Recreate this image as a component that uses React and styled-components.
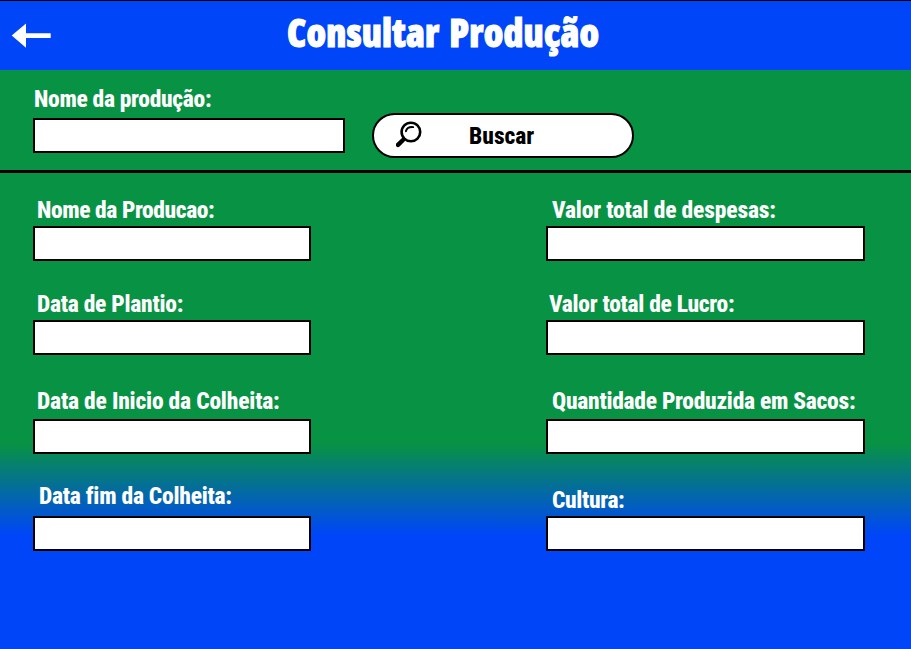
import React from 'react';
import styled, { createGlobalStyle } from 'styled-components';

const GlobalStyle = createGlobalStyle`
  * { box-sizing: border-box; }
  body { margin: 0; overflow: hidden; }
`;

const Page = styled.div`
  display: flex;
  flex-direction: column;
  width: 911px;
  height: 649px;
  overflow: hidden;
  font-family: Roboto, "Liberation Sans", sans-serif;
  color: #fff;
  background: linear-gradient(#089244 0, #089244 444px, #0046f8 535px, #0046f8 100%);
`;

const Header = styled.header`
  display: grid;
  grid-template-columns: 50px 1fr 38px;
  flex: none;
  height: 70px;
  border-top: 1px solid #000;
  background: #0046f8;
`;

const BackButton = styled.button`
  display: flex;
  width: 51px;
  height: 69px;
  padding: 22px 0 0 11px;
  border: 0;
  background: none;
`;

const Title = styled.h1`
  margin: 0;
  padding-left: 237px;
  font-family: "Open Sans", Roboto, sans-serif;
  font-size: 38px;
  font-weight: 800;
  font-stretch: 75%;
  line-height: 63px;
  letter-spacing: 0;
  word-spacing: 3px;
  letter-spacing: 0.2px;
  white-space: nowrap;
  -webkit-text-stroke: 1.1px #fff;
`;

const SearchBar = styled.form`
  display: flex;
  align-items: flex-start;
  gap: 27px;
  flex: none;
  height: 103px;
  padding: 17px 33px 0;
  border-bottom: 3px solid #000;
`;

const Field = styled.label`
  display: flex;
  flex-direction: column;
  justify-content: flex-end;
  gap: ${(p) => p.$gap}px;
  width: ${(p) => p.$width};
`;

const Caption = styled.span`
  padding-left: ${(p) => p.$indent}px;
  font-size: 23.5px;
  font-weight: 800;
  font-stretch: 75%;
  line-height: 24px;
  letter-spacing: ${(p) => p.$tracking}px;
  white-space: nowrap;
`;

const Input = styled.input`
  display: block;
  width: 100%;
  height: 35px;
  margin: 0;
  padding: 0 8px;
  border: 2px solid #000;
  border-radius: 0;
  background: #fff;
  outline: none;
`;

const SearchButton = styled.button`
  display: grid;
  grid-template-columns: 73px 1fr;
  width: 262px;
  height: 45px;
  margin-top: 25.5px;
  padding: 0 0 0 22px;
  border: 2px solid #000;
  border-radius: 23px;
  background: #fff;
  color: #000;
  font-family: inherit;
  font-size: 23.5px;
  font-weight: 800;
  font-stretch: 75%;
  line-height: 43px;
  text-align: left;
`;

const SearchIcon = styled.svg`
  display: block;
  margin-top: 6px;
`;

const Details = styled.main`
  display: grid;
  grid-template-columns: 278px 318.5px;
  grid-template-rows: 88px 94px 99px 97px;
  column-gap: 235px;
  padding-left: 33px;
`;

const fields = [
  { label: 'Nome da Producao:', indent: 4, tracking: -0.4, gap: 4 },
  { label: 'Valor total de despesas:', indent: 6, tracking: -0.15, gap: 4 },
  { label: 'Data de Plantio:', indent: 4, tracking: -0.25, gap: 4 },
  { label: 'Valor total de Lucro:', indent: 3, tracking: -0.28, gap: 4 },
  { label: 'Data de Inicio da Colheita:', indent: 4, tracking: -0.18, gap: 6 },
  { label: 'Quantidade Produzida em Sacos:', indent: 6, tracking: -0.26, gap: 6 },
  { label: 'Data fim da Colheita:', indent: 6, tracking: -0.23, gap: 8 },
  { label: 'Cultura:', indent: 6, tracking: -0.35, gap: 4 },
];

export default function App() {
  return (
    <>
      <GlobalStyle />
      <Page>
        <Header>
          <BackButton type="button" aria-label="Voltar">
            <svg width="40" height="26" viewBox="0 0 40 26">
              <path d="M.7 12.5 15 .5V10.2H39.7V15H15V24.8Z" fill="#fff" />
            </svg>
          </BackButton>
          <Title>Consultar Produção</Title>
        </Header>
        <SearchBar>
          <Field $width="312px" $gap={7}>
            <Caption $indent={1} $tracking={-0.3}>Nome da produção:</Caption>
            <Input />
          </Field>
          <SearchButton type="button">
            <SearchIcon width="27" height="27" viewBox="0 0 27 27" fill="none" stroke="#000">
              <circle cx="14.9" cy="11" r="9.3" strokeWidth="2.6" />
              <path d="M9.9 10.2C10.6 7.2 13 5.8 17.2 6.1" strokeWidth="1.9" strokeLinecap="round" />
              <path d="M8.8 17.2 6.4 19.6" strokeWidth="3" />
              <path d="M7 19 2 23.9" strokeWidth="4.4" strokeLinecap="round" />
            </SearchIcon>
            Buscar
          </SearchButton>
        </SearchBar>
        <Details>
          {fields.map((f) => (
            <Field key={f.label} $width="100%" $gap={f.gap}>
              <Caption $indent={f.indent} $tracking={f.tracking}>{f.label}</Caption>
              <Input />
            </Field>
          ))}
        </Details>
      </Page>
    </>
  );
}
